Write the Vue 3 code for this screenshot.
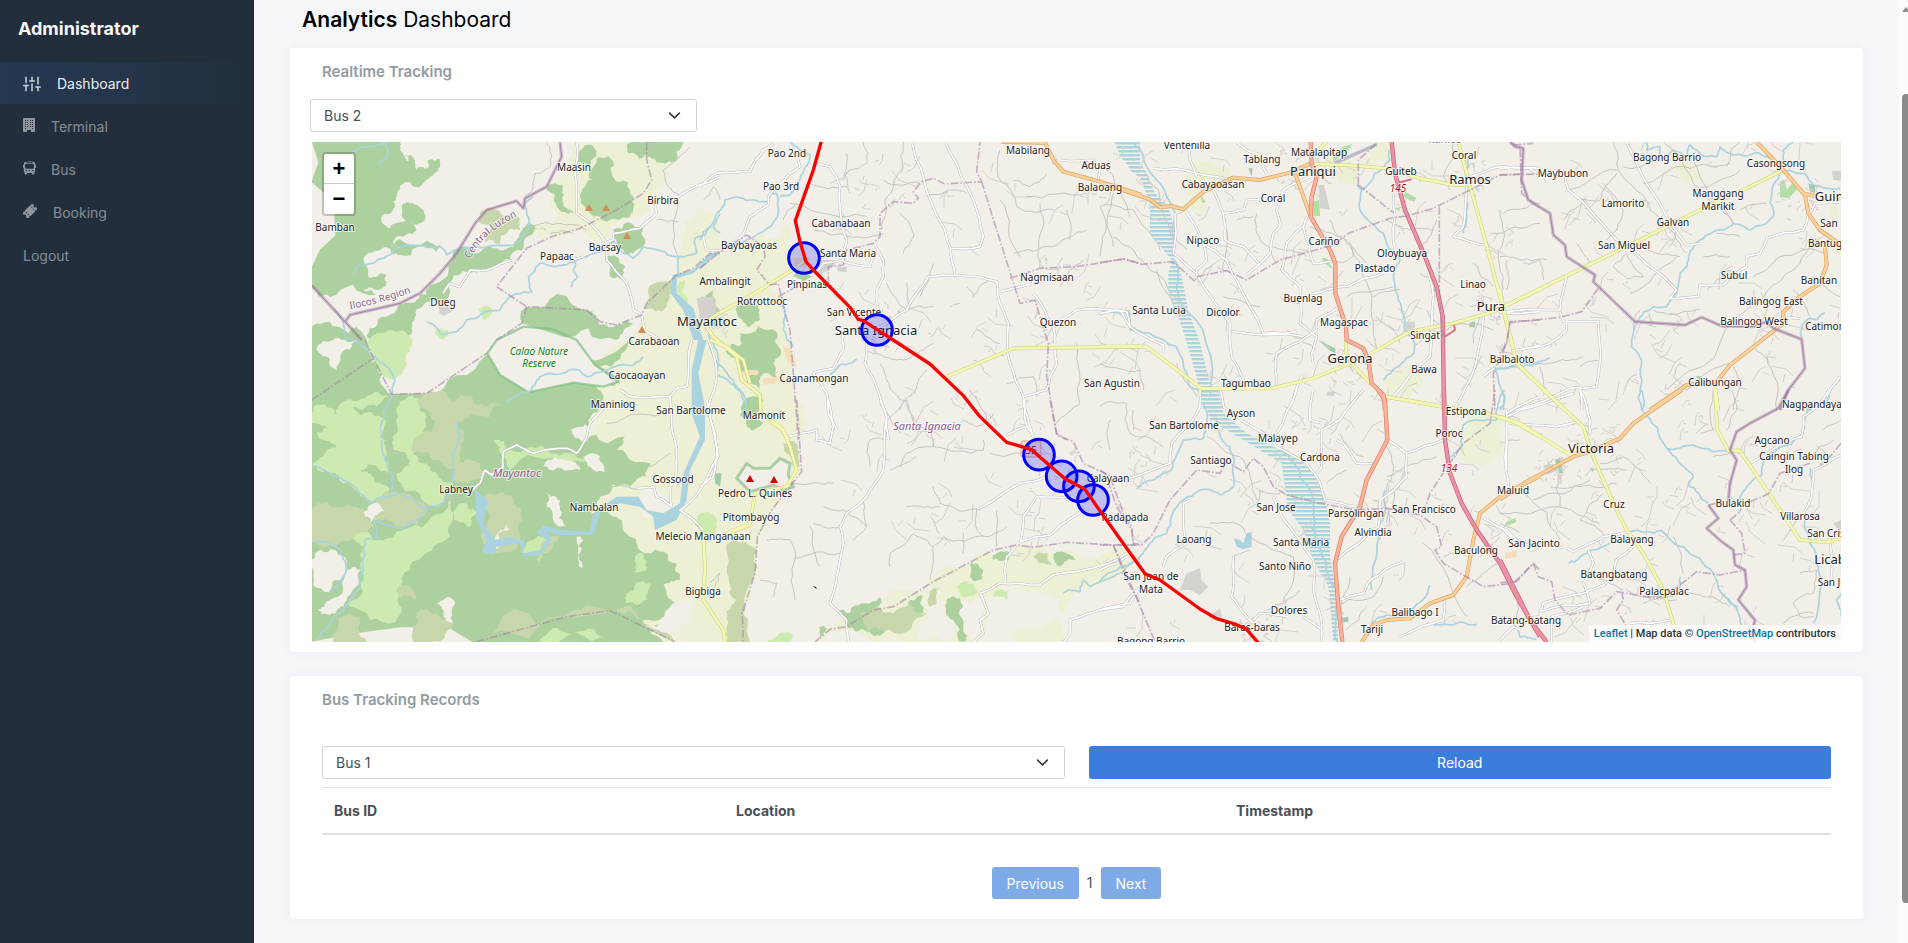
<script setup>
import { ref } from 'vue'

const buses = ['Bus 1', 'Bus 2', 'Bus 3']
const trackedBus = ref('Bus 2')
const recordBus = ref('Bus 1')

const navItems = [
  { label: 'Dashboard', icon: 'sliders', active: true },
  { label: 'Terminal', icon: 'building' },
  { label: 'Bus', icon: 'bus' },
  { label: 'Booking', icon: 'ticket' },
  { label: 'Logout', icon: null }
]

// Map sheets: each has its own origin, with three units to a map pixel.
const sheets = {
  A: [280, 0], B: [310, 340], C: [700, 130], D: [700, 400],
  E: [1100, 130], F: [1100, 390], G: [1500, 130], H: [1500, 390]
}
const place = (s) => `translate(${sheets[s][0]} ${sheets[s][1]}) scale(0.33333)`

const random = (start) => {
  let seed = start
  return () => (seed = (seed * 16807) % 2147483647) / 2147483647
}

const areas = [
  ['farm', 'A', 'M880 427 1200 427 1195 480 1160 500 1150 560 1110 590 1100 640 1020 660 960 720 880 690 820 710 740 690 830 640 810 560 860 510Z'],
  ['farm', 'A', 'M1210 665 1300 640 1320 700 1320 1020 1040 1020 1090 960 1150 870 1190 830 1200 760Z'],
  ['farm', 'C', 'M0 285 60 330 90 370 150 330 230 330 280 270 290 400 240 440 180 470 240 500 270 600 285 700 295 930 0 930Z'],
  ['farm', 'B', 'M960 0 1320 0 1320 905 1060 905 620 905 850 560 850 200Z'],
  ['farm', 'D', 'M0 0 293 0 305 215 215 330 172 410 165 520 127 640 130 726 0 726Z'],
  ['farm', 'D', 'M690 560 800 500 860 450 980 440 1150 480 1320 470 1290 500 1140 560 1100 620 1100 726 700 726 820 720 850 590Z'],
  ['farm', 'D', 'M350 726 400 680 500 650 690 570 780 550 800 580 760 620 820 726Z'],
  ['farm', 'E', 'M260 130 330 90 390 110 390 150 320 180 300 260 270 200Z'],
  ['farm', 'E', 'M650 100 770 106 770 165 710 160Z'],
  ['farm', 'E', 'M820 36 870 36 875 100 800 105Z'],
  ['farm', 'E', 'M850 750 960 725 960 770 920 800 855 795Z'],
  ['farm', 'F', 'M1100 95 1215 85 1210 190 1140 230 1080 210Z'],
  ['plot', 'G', 'M520 110 570 90 610 145 560 165Z M985 230 1015 225 1010 265 990 260Z'],
  ['bare', 'D', 'M860 590 1000 570 1080 600 1060 660 1020 690 940 700 880 726 850 700 870 650Z'],
  ['bare', 'D', 'M670 600 740 620 760 700 740 726 650 726 680 660Z'],
  ['forest', 'A', 'M96 427 360 427 375 470 400 490 400 530 395 545 350 590 345 620 305 650 330 685 385 665 410 690 345 715 330 745 250 775 265 830 320 825 320 855 250 870 290 885 150 892 96 860Z'],
  ['forest', 'A', 'M375 465 405 480 410 510 440 505 445 480 480 478 470 515 420 560 385 540Z'],
  ['forest', 'A', 'M365 620 400 610 430 630 435 660 400 675 370 655Z'],
  ['forest', 'A', 'M320 740 400 735 480 740 470 755 360 765Z'],
  ['forest', 'A', 'M520 770 560 740 640 745 710 720 750 670 800 690 740 710 690 780 620 815 560 815 500 860 485 915 420 925 395 985 350 1020 270 1020 270 985 350 930 410 900 450 855Z'],
  ['forest', 'A', 'M96 1020 110 970 150 965 150 1020Z'],
  ['forest', 'A', 'M205 1020 230 980 260 1020Z'],
  ['forest', 'A', 'M740 920 920 930 960 975 1010 975 1040 960 1060 970 1010 1020 840 1020 725 970Z'],
  ['forest', 'A', 'M960 470 1000 485 1000 530 1060 590 1050 650 980 665 940 650 915 620 915 560 930 510Z'],
  ['forest', 'A', 'M1090 427 1210 427 1180 485 1130 490 1110 470 1050 460 1040 440Z'],
  ['forest', 'A', 'M800 560 850 560 850 610 880 640 830 620Z'],
  ['forest', 'A', 'M900 450 940 440 950 470 930 500 890 490Z'],
  ['forest', 'A', 'M1000 690 1090 685 1095 720 1060 760 1010 730Z'],
  ['forest', 'A', 'M975 780 1010 770 1035 800 1030 840 990 830Z'],
  ['forest', 'B', 'M5 0 170 0 200 60 250 162 350 160 530 45 560 0 960 0 870 80 930 130 860 140 870 200 840 260 780 270 800 295 860 285 950 290 920 330 1020 370 1010 410 960 440 870 470 840 520 920 530 960 590 1010 640 1100 670 1110 720 1060 735 1100 790 1000 840 1060 905 5 905Z'],
  ['grass', 'B', 'M5 225 30 195 80 225 110 180 180 165 235 170 200 200 130 200 190 225 220 235 210 290 225 350 235 400 200 380 150 390 200 430 240 450 190 485 100 430 60 400 5 375 40 350 80 320 20 280 50 260 5 250Z'],
  ['grass', 'B', 'M270 185 330 180 350 230 340 290 310 340 350 370 380 400 430 430 400 490 350 490 280 450 260 400 300 360 250 330 260 250Z'],
  ['grass', 'B', 'M100 590 190 600 260 575 400 520 420 480 430 530 370 620 300 690 260 750 240 850 180 840 115 790 160 700 160 620Z'],
  ['grass', 'B', 'M170 5 310 0 290 70 250 120 200 70Z'],
  ['grass', 'B', 'M550 300 600 330 720 340 830 360 760 380 600 390 580 350Z'],
  ['grass', 'B', 'M670 600 700 590 710 640 640 640Z'],
  ['grass', 'B', 'M430 540 470 490 500 520 480 560Z'],
  ['grass', 'B', 'M950 760 1020 730 1010 780 950 790Z'],
  ['grass', 'B', 'M975 650 1000 640 1010 690 975 700Z'],
  ['grass', 'B', 'M700 890 790 880 900 905 690 905Z'],
  ['scrub', 'B', 'M320 180 430 185 450 160 490 190 580 195 530 235 440 245 455 320 440 380 380 360 310 340 320 290 370 280 380 240Z'],
  ['scrub', 'B', 'M190 490 280 460 345 490 350 520 280 560 190 540Z'],
  ['scrub', 'B', 'M5 510 100 500 165 510 190 560 110 605 40 620 5 600Z'],
  ['scrub', 'B', 'M530 460 610 490 640 540 630 600 550 640 520 570Z'],
  ['scrub', 'B', 'M90 830 150 830 170 905 70 905Z'],
  ['scrub', 'B', 'M320 820 380 820 430 850 390 905 310 905Z'],
  ['scrub', 'B', 'M260 745 310 750 320 780 270 775Z'],
  ['scrub', 'B', 'M500 905 760 830 900 815 1000 850 1090 905Z'],
  ['scrub', 'B', 'M440 370 510 370 520 400 470 430 430 420Z'],
  ['scrub', 'B', 'M1280 650 1320 640 1320 905 1270 905 1250 860 1280 780Z'],
  ['scrub', 'B', 'M680 660 750 580 730 620 690 680Z'],
  ['bare', 'B', 'M5 660 75 630 110 680 90 720 60 755 10 735Z'],
  ['bare', 'B', 'M110 690 155 690 150 730 100 800 60 825 18 805 60 780Z'],
  ['bare', 'B', 'M160 520 210 495 225 515 180 555Z'],
  ['bare', 'B', 'M820 350 870 350 885 395 840 380Z'],
  ['bare', 'B', 'M700 380 780 360 810 390 720 390Z'],
  ['bare', 'B', 'M710 460 750 500 770 560 750 560 710 500Z'],
  ['bare', 'B', 'M380 790 435 785 430 850 400 820Z'],
  ['bare', 'B', 'M20 30 70 0 140 0 90 50 80 90 50 50Z'],
  ['bare', 'B', 'M985 455 1080 470 1080 520 1000 530 980 490Z'],
  ['bare', 'B', 'M570 620 590 550 600 570 540 640Z'],
  ['bare', 'B', 'M800 590 820 600 815 690 805 660Z'],
  ['bare', 'B', 'M1060 840 1140 780 1150 840 1100 880 1010 860Z'],
  ['clearing', 'B', 'M340 0 540 0 530 40 350 160 250 162 280 90Z M560 0 800 0 855 75 925 125 880 140 790 128 655 157 570 105 532 40Z'],
  ['clearing', 'A', 'M725 970 880 1020 660 1020Z'],
  ['scrub', 'A', 'M600 640 650 630 715 650 720 690 680 700 660 735 615 725 635 685 600 670Z'],
  ['scrub', 'A', 'M1100 905 1180 830 1190 850 1160 920 1090 935Z'],
  ['grass', 'A', 'M590 925 640 930 610 960Z'],
  ['grass', 'A', 'M465 995 505 990 490 1020Z'],
  ['grass', 'A', 'M1190 860 1215 840 1220 910 1190 910Z'],
  ['forest', 'C', 'M20 580 40 480 60 540 60 590Z'],
  ['forest', 'C', 'M75 665 125 640 120 610 230 605 235 650 220 700 230 740 190 730 180 780 140 760 110 690Z'],
  ['forest', 'C', 'M110 530 160 520 180 570 140 590Z'],
  ['forest', 'C', 'M280 440 310 420 340 440 310 460Z'],
  ['forest', 'C', 'M130 815 190 810 180 840 150 860 190 880 140 890Z'],
  ['sand', 'C', 'M250 650 270 655 290 710 265 700Z M130 720 175 720 175 735 130 735Z M190 745 240 740 225 760 190 765Z M280 385 330 380 320 410 285 410Z'],
  ['forest', 'D', 'M410 635 450 640 500 610 540 592 530 630 560 645 590 650 560 690 500 695 440 680Z'],
  ['forest', 'D', 'M650 590 675 590 670 640 640 660 620 630Z'],
  ['forest', 'D', 'M740 600 780 595 790 690 800 720 780 726 760 660Z'],
  ['forest', 'D', 'M355 680 380 685 360 710Z'],
  ['forest', 'D', 'M1060 465 1110 465 1125 480 1080 500Z'],
  ['forest', 'D', 'M810 490 850 510 850 540 810 530Z'],
  ['forest', 'D', 'M880 465 930 465 925 480 880 480Z'],
  ['scrub', 'D', 'M80 430 140 430 170 450 165 520 127 640 130 726 80 726 110 600 95 540Z'],
  ['scrub', 'D', 'M480 640 580 640 640 620 680 640 570 690 500 700Z'],
  ['scrub', 'D', 'M1000 470 1040 460 1060 490 1020 490Z'],
  ['scrub', 'D', 'M690 580 720 560 710 610 690 620Z'],
  ['scrub', 'D', 'M250 130 290 130 300 200 280 200Z'],
  ['grass', 'D', 'M0 340 45 350 40 400 0 410Z'],
  ['grass', 'D', 'M770 560 820 550 820 590 780 590Z'],
  ['grass', 'D', 'M880 590 930 570 920 600Z'],
  ['grass', 'D', 'M240 700 280 710 270 726 200 726Z'],
  ['reserve', 'D', 'M110 235 140 190 160 205 210 205 240 175 270 190 265 225 280 260 250 272 220 255 150 275Z'],
  ['park', 'E', 'M640 215 658 210 660 258 640 258Z M730 50 755 42 750 55 700 95 700 80Z M885 235 900 232 898 245Z M915 185 950 205 940 215 910 200Z M665 385 680 385 700 420 675 400Z M300 195 318 215 308 220Z M260 155 275 150 275 165Z'],
  ['park', 'G', 'M840 155 855 150 860 180 885 150 890 180 865 205 840 200Z'],
  ['park', 'F', 'M1215 400 1245 385 1250 395 1220 408Z'],
  ['wood', 'E', 'M655 630 705 655 708 670 690 662Z M1108 578 1125 574 1125 592 1108 592Z M445 115 458 115 455 140Z'],
  ['wood', 'G', 'M925 160 945 165 945 190 930 185Z M585 740 603 738 603 750Z'],
  ['wood', 'H', 'M165 210 180 203 190 250 178 250Z M268 235 283 235 278 245Z'],
  ['wood', 'F', 'M725 685 745 680 745 695 728 697Z'],
  ['wood', 'D', 'M45 220 65 220 60 260 45 250Z'],
  ['urban', 'A', 'M475 920 515 920 515 935 490 948 478 940Z M1250 895 1300 890 1310 940 1260 950Z'],
  ['urban', 'E', 'M655 165 672 165 690 240 660 235Z M915 575 945 575 945 592 920 605Z M680 785 700 785 705 797 680 797Z'],
  ['urban', 'F', 'M240 600 260 550 300 535 305 570 325 590 300 615 270 600Z M325 680 360 655 365 680 340 692Z M680 5 705 5 700 18Z'],
  ['urban', 'G', 'M995 122 1023 122 1023 152 1000 150Z'],
  ['urban', 'H', 'M130 225 160 222 175 240 140 255Z M1000 400 1023 390 1023 430Z'],
  ['urban', 'C', 'M0 500 40 500 45 560 0 570Z M350 390 410 390 400 410 350 440Z M410 410 440 410 440 425 415 425Z'],
  ['sand', 'F', 'M1215 490 1250 480 1250 500 1215 508Z'],
  ['water', 'F', 'M402 445 420 450 430 460 440 430 455 425 455 470 430 478 410 470Z'],
  ['water', 'B', 'M495 450 535 480 520 550 555 600 600 590 645 605 640 640 690 630 710 600 680 580 700 555 750 570 840 575 850 520 920 470 985 470 1010 510 1060 520 1110 490 1120 400 1170 290 1145 220 1145 90 1165 0 1190 0 1165 100 1185 200 1185 300 1140 390 1130 480 1100 540 1035 570 1030 530 990 500 930 490 870 520 850 585 750 585 710 575 725 600 690 645 640 650 630 610 560 620 550 645 515 635 530 600 500 540Z'],
  ['water', 'A', 'M1320 760 1290 775 1240 820 1190 835 1190 880 1240 925 1270 1020 1240 1020 1210 930 1172 880 1178 825 1240 810 1290 760Z'],
  ['airfield', 'E', 'M700 95 830 38 832 48 706 104Z']
]

const hatched = [
  ['E', 'M45 36 95 36 105 80 135 120 165 190 205 230 225 300 220 380 245 440 265 540 300 640 330 760 362 840 310 840 290 740 255 620 235 560 205 490 205 430 215 390 150 310 150 220 120 140 60 80Z'],
  ['F', 'M305 0 355 0 370 70 440 130 540 180 600 210 650 260 675 330 690 400 690 500 705 580 715 755 700 755 685 590 640 510 610 420 565 360 545 220 430 150 330 90Z'],
  ['C', 'M1245 36 1320 36 1320 145 1290 120Z']
]

const lines = [
  ['river', 'A', 'M220 823 240 795 280 790 340 750 400 735 480 738 500 765 540 745 600 742 700 735 745 690 740 640 735 610 760 590'],
  ['river', 'A', 'M215 457 270 440 320 427M315 427 322 470 300 490'],
  ['river', 'A', 'M440 965 480 1000 530 995 560 960 600 945 660 930 690 890 720 880 755 875 745 830 780 790 830 800 885 785 920 770 1000 725 1060 775 1090 740 1135 750 1195 770 1250 760 1245 715 1275 705 1290 680'],
  ['river', 'A', 'M885 775 880 810 893 830 873 862M1195 770 1195 825M165 930 190 975 205 1020'],
  ['river', 'A', 'M1320 700 1300 680 1320 640'],
  ['river', 'B', 'M120 0 170 30 205 60 255 120 245 170 210 260 215 310 240 390 245 460M5 375 60 400 120 430 180 490 270 460 350 510 280 565 190 545 205 590 165 600 160 690 150 740 100 810 50 865 20 900'],
  ['river', 'B', 'M5 605 90 630 110 685 60 755M350 500 400 490 420 460 430 430 430 370 450 290 435 245M590 185 655 157 690 110 810 90 830 110 890 90 970 75 1000 50'],
  ['river', 'B', 'M1205 0 1220 100 1300 160 1305 220'],
  ['river', 'C', 'M0 330 30 290 75 210 160 210 200 215 215 190 230 190 225 270 180 310 120 340 50 370 0 415M330 70 325 100 300 150 270 195 240 200M270 36 300 60 330 75'],
  ['river', 'C', 'M470 688 425 702 390 735M30 560 50 700 110 770 140 820M245 500 250 600 280 650M1285 540 1290 600 1325 605'],
  ['river', 'D', 'M1090 578 1140 575 1150 540 1170 560 1240 530 1270 520 1290 490 1320 480'],
  ['river', 'E', 'M95 36 140 110 200 200 225 250 222 380M770 165 785 180 870 90 865 60M785 180 780 240 850 310 900 390 880 440 895 510 915 600 935 620 942 670 905 700 850 750'],
  ['river', 'E', 'M0 555 60 550 100 595 190 630 230 650 250 700 270 770 305 790M1105 80 1100 200 1090 310M1320 700 1240 710 1185 720 1215 800 1210 840M225 390 235 500 330 800'],
  ['river', 'F', 'M110 298 160 270 215 240 250 150 310 145 320 90 310 40M350 90 360 140 390 170 400 230 400 290 360 315 300 300 250 330 200 430 150 460 120 500 60 530 0 575'],
  ['river', 'F', 'M540 180 600 260 640 330 640 420 680 520 710 600 712 756M1213 0 1190 90 1090 105 1085 170 1050 200M815 700 860 675 930 660 990 585M980 700 1030 703 1130 703M855 300 830 420 815 600'],
  ['river', 'G', 'M440 36 440 60 480 50 480 90 520 60 560 80 570 45 620 80 650 80 660 50 700 75 780 70 820 90 850 120 915 130 940 165 1020 175M880 36 850 60 850 100 840 130 815 180 820 260 750 300 700 280 670 300 600 330 570 365 560 410 540 430 530 490 500 530 460 530 410 575 395 650 425 700 425 840'],
  ['river', 'G', 'M905 625 905 590 930 565 950 570 975 548M1020 750 980 800 920 840M0 715 90 700 150 685'],
  ['river', 'H', 'M425 0 425 60 500 175 530 205 580 260 565 285 625 340M500 175 580 165 640 185 690 185M985 0 980 40 920 60 910 130 830 180 790 215 785 255 740 290 720 320 715 370'],
  ['river', 'H', 'M205 518 225 515 260 490 330 460M390 425 485 422 550 470 640 550 665 610 705 650 725 720M665 610 715 650M40 700 60 740 110 750M0 60 15 30 5 0M1023 610 1010 630 1023 680M915 370 930 460 955 540 940 700M540 560 540 600M930 235 940 280'],

  ['minor', 'A', 'M800 427 810 500 765 520 760 560 735 590M880 700 810 700M755 680 840 670 920 690M1150 510 1200 470 1230 440M1195 600 1195 770M1150 510 1165 560 1200 590M1130 660 1195 665M1270 600 1300 560 1320 600'],
  ['minor', 'B', 'M390 500 440 470M890 250 950 230 1060 220M870 465 910 440 985 445M1020 380 1080 340'],
  ['minor', 'C', 'M490 36 500 100 450 120 430 150M610 36 605 120 555 210 545 300M440 70 450 190M550 150 660 160M330 160 440 170M270 220 440 260 500 260M390 160 450 120M340 300 450 320 550 310M250 270 290 220M600 250 640 310 630 340 610 370M680 200 770 180 800 190M620 460 630 530M500 660 590 690 670 660 700 640M700 400 660 500M940 150 990 170 1040 130M980 200 1160 190M940 370 1060 350 1160 300M900 60 900 150 950 230 1060 240M1200 230 1200 380M1240 190 1240 350M1020 220 1020 400M900 210 960 380M1100 240 1110 330'],
  ['minor', 'C', 'M800 470 820 500 870 450M830 600 900 640M750 530 780 520M920 760 1000 740 1010 800M820 690 870 740M1080 470 1150 390M560 460 620 540 700 530M540 700 560 750 620 820 650 900M600 840 680 720M810 780 860 870M1130 640 1140 820 1070 880'],
  ['minor', 'D', 'M510 200 510 120 550 120M550 80 620 0M620 0 650 80 720 90 790 60 830 80 880 40M690 80 700 140 850 150 850 120M600 200 620 160 700 140M870 160 960 160M570 210 650 170M500 380 430 330 370 320M490 300 500 380 460 420M340 370 420 380M200 420 270 420 285 450 285 600M285 475 420 460M330 380 360 500M640 400 570 460 570 500M640 400 680 420 700 440 690 540M700 440 730 410 860 410 920 380M790 400 790 460M700 260 720 310 840 330M620 320 720 320M830 330 830 390 850 410M890 330 890 440M280 250 400 250M180 540 230 550 220 590M30 550 60 520 30 600M720 400 690 350M540 0 600 100'],
  ['minor', 'E', 'M130 120 190 250 260 360M0 230 100 240 180 360M370 250 370 430M300 440 340 400M470 250 480 330 530 400M630 290 750 340 760 380 700 400M690 270 740 340 800 400M750 350 790 440 820 600 830 660M410 270 460 260M860 270 930 300 1000 300M1010 270 960 350M1210 250 1320 220M1170 310 1320 280M960 430 1010 450 1000 510M540 500 600 520M740 500 880 470M830 560 900 640M1220 390 1220 480M1120 400 1180 470M940 650 990 600 1180 600M820 500 900 480M0 100 60 180 90 260M40 320 150 420 240 540M170 420 240 560M1060 40 1030 140 1050 180M1270 400 1320 390M1140 560 1120 640M370 500 480 530M520 350 620 380M560 600 640 650M680 680 730 700M230 700 290 800M0 700 120 720 130 780M980 540 1030 600'],
  ['minor', 'F', 'M0 50 80 40 90 130 140 140M140 140 190 170M330 400 420 405 450 440 580 500M400 500 450 480M580 500 550 640 500 660M470 340 480 300 540 310M320 140 420 200 470 330M680 280 740 240M860 150 880 240 860 290 870 400 840 450M900 290 880 300 860 400M970 460 1100 680M1140 500 1200 440M1200 520 1100 590M680 660 820 620 850 560M750 560 730 700M720 130 790 200M860 260 1010 200M600 600 550 640M1230 560 1250 690M1030 500 1090 470M740 720 800 650M100 60 100 120M30 90 30 180'],
  ['minor', 'G', 'M340 36 350 100 400 170 450 240 540 340 560 370M370 110 470 90M200 180 350 120M190 270 260 200M350 130 300 210 230 210M490 36 620 200 700 280M580 90 700 280M430 160 530 110 690 100M590 180 720 120M720 36 680 110M0 240 10 330 10 480M0 380 60 390 140 390M120 390 130 450M230 340 270 400M500 780 740 540 900 400 980 310M620 480 650 450 690 420M760 440 840 380 980 370M540 380 470 370 410 330M340 410 380 445 430 440M340 410 380 370 430 440M390 490 530 380M540 700 520 740 560 780 700 700M700 710 720 770 700 840M800 680 830 840M760 650 810 700M460 540 540 550 600 540M400 600 420 540M450 590 450 550M880 480 930 560M940 440 1020 500M610 380 690 380M650 310 720 320M310 160 370 240 350 300 320 330M800 220 720 240M120 700 210 690 250 680M120 710 140 790M240 710 300 690'],
  ['minor', 'H', 'M15 80 60 90M640 0 640 120 600 130M690 0 710 60 680 120M280 240 380 240M150 290 240 290 350 280M0 370 120 360 300 400M70 310 180 450M180 240 180 350M100 330 270 270M310 310 240 390M300 220 370 200 420 240 450 280M0 400 60 430M380 600 560 610 640 620 690 650M440 690 400 720M900 550 950 540 940 610 880 640 900 680 940 680M0 160 60 150M520 440 550 550M850 450 890 390M930 200 1000 150M640 200 690 190M590 130 620 100M430 640 530 630M970 120 1023 90M240 30 250 60M290 560 370 600M850 700 940 670M240 390 320 440'],

  ['tertiary', 'A', 'M890 427 885 520 890 640 940 680 980 730 980 780 1040 850 1060 930 1085 945M1000 700 1080 685 1130 640 1125 600M1195 590 1320 530M980 725 1000 720 1000 700M910 770 860 780M490 880 510 850 540 860 570 810 620 810 700 780M1085 945 1095 990 1140 1020'],
  ['tertiary', 'B', 'M490 450 510 430 525 390 545 405 580 380 580 335 620 315 670 340 770 325 800 340 830 290 840 250 880 205M930 150 960 170 1080 170 1100 145 1130 140 1145 0M1080 170 1085 260 1100 350 1095 420 1080 440 1085 500M1195 0 1220 100 1195 200 1225 350 1170 450 1110 510 1180 570M980 445 1030 440 1040 470 1085 500'],
  ['tertiary', 'C', 'M0 170 50 130 150 125 190 60 220 40M270 45 300 110 270 130 205 200 205 225 150 260 130 310 90 360 20 360 10 320M350 100 390 110 420 170 420 240 440 330 430 390 370 400 350 430M430 395 510 410 520 370M525 345 550 390 550 440 530 480 535 550M540 590 620 540 650 490 685 440 765 435 890 455 900 520 925 580 930 700 970 800 975 870 1000 920M635 36 650 90 670 140 730 290 750 350 765 435M750 355 840 350 850 320 820 210 780 130 735 36M500 630 495 700 540 800 560 860 565 930M430 600 430 660 400 715 340 730 380 790 385 850 410 900M900 485 1000 460 990 440M1080 90 1180 90 1200 120 1195 150M1000 490 1060 590 1065 640M1060 595 1130 540 1280 545 1290 590M1065 660 1070 700 1050 740 1040 780 970 800'],
  ['tertiary', 'D', 'M540 0 560 50 550 210 500 290 440 340 420 380 430 430 410 530 390 610 440 660 445 726M265 110 350 90 350 120 390 130 400 80 385 0M970 0 985 60 1000 110M980 80 920 105M840 325 960 250 1040 230M960 430 970 350 1010 290 1110 290M960 425 1050 405 1120 350 1150 330M950 435 920 470 915 550M820 726 850 700 840 660 865 640 840 580 900 550 1020 555 1060 525 1150 510 1250 480 1280 460M1090 726 1110 700 1110 660 1200 630 1290 610 1320 560M20 0 50 140 40 230 0 260'],
  ['tertiary', 'E', 'M160 115 290 130 400 145M260 36 290 140M410 36 440 60 480 75 500 130M630 140 550 180 530 240 540 290 520 310 510 370 440 435M340 180 370 250 375 330 430 350 480 405M370 250 430 240 440 210 490 210M225 250 220 370 290 430 390 580 395 680 430 750M255 240 310 340 320 390 290 420 290 440M310 340 380 390 410 450 490 610 610 620M620 260 610 290 560 340 545 420 600 470 600 580 650 620 635 670 640 700M395 605 490 615 590 605M530 770 530 670 620 620 650 600 650 570 710 535M610 290 640 400 700 395M640 490 700 475 740 470 850 430M880 190 880 330 890 380M1100 170 1090 290 1060 320 1150 345M1110 140 1200 110 1320 115M985 430 1000 500 990 680 880 800M0 550 60 540 90 590 190 645 190 670M1210 548 1320 545M1150 560 1110 750 1060 840M1320 645 1250 660 1220 690 1150 740M610 730 570 830'],
  ['tertiary', 'F', 'M360 0 370 50 490 130 530 170 620 220 660 280 675 330 770 350M590 0 530 130M790 0 720 90 665 120 665 230 650 250M640 0 630 90 665 100M300 0 300 50 215 160 210 220 90 265M710 150 730 160 770 220 820 220M865 150 920 190 920 260 840 330 835 410 710 510M920 190 1030 150M520 320 560 400 600 450 640 510 640 600 665 700 665 756M270 330 250 340 260 460 200 500 190 530M400 500 395 620 440 680 460 700M460 690 480 670 560 680M610 680 660 715M715 630 790 610 810 570 910 515M1150 385 1220 420 1260 460M1220 60 1215 200 1225 290M1035 620 1030 690 900 740M1250 700 1320 680M0 540 100 490M0 660 70 650 110 600M1320 20 1220 70'],
  ['tertiary', 'G', 'M0 115 90 115 110 130M195 140 205 180 350 330 530 480 510 505M380 36 400 80 560 345 600 340M510 505 595 500 600 465 670 465 740 410 740 380 780 370 800 325 910 300 945 220 1023 215M200 440 180 540 0 548M180 545 190 575 295 575 300 700 290 770 210 775 50 840M60 660 150 640 200 600 200 570M240 770 245 840M850 565 900 565M1020 740 980 800'],
  ['tertiary', 'H', 'M240 0 270 90 270 130M220 10 60 60 20 80 20 240M30 100 170 110 230 95M200 475 220 485 310 440 390 425M180 475 190 470M0 410 40 450 110 470M265 480 280 520 250 580 270 640 120 665 130 640 250 610 330 570 350 510 400 470M155 756 155 680 250 650M390 700 510 690M985 0 960 40 910 80 905 140 860 155 750 220M1023 195 940 240 935 320 910 370M990 460 1000 590M0 750 40 710 60 720'],

  ['secondary', 'C', 'M740 740 940 655 1320 650M0 590 40 560 180 480 270 425 310 395M20 590 40 620 110 680 125 750 180 795 182 850 240 890 265 930'],
  ['secondary', 'D', 'M210 65 250 90 270 140 290 210 260 260 165 280 150 370 80 400M10 410 15 500 10 600 70 690 75 726'],
  ['secondary', 'B', 'M1200 0 1250 20 1300 60 1320 130M1320 555 1250 580'],
  ['secondary', 'E', 'M0 650 140 650 305 776 360 776 515 775 640 745 750 700M640 102 740 105 860 115 960 145 1060 165 1100 165M1075 36 1105 150 1150 310 1200 500 1225 600 1250 700 1320 768M810 672 930 605 1060 580 1180 545 1320 478M855 800 1025 830M738 630 738 670 760 705 815 765M655 60 680 36'],
  ['secondary', 'F', 'M850 18 1030 50 1180 75 1250 100 1320 140'],
  ['secondary', 'G', 'M0 480 10 530 50 700 195 840M20 525 400 340 600 240 740 175 850 120M645 770 655 840M1000 340 1023 370'],
  ['secondary', 'H', 'M130 0 250 110 275 190 340 340 380 420 430 490 490 600 520 700 540 756M0 80 60 100 210 195 240 190M645 0 652 120 685 182 720 182 800 300 900 450 985 457 1023 445M985 457 990 440'],
  ['primary', 'C', 'M905 36 1035 38 1060 90 1090 125 1200 155 1325 195'],
  ['primary', 'E', 'M0 158 60 178 150 208 180 232 215 228 250 238 310 185 400 143 480 150 570 128 632 100M585 130 632 260'],
  ['primary', 'F', 'M785 756 820 705 860 690 930 685 990 640 1060 615 1100 560 1120 450 1140 370 1200 320 1320 258'],
  ['primary', 'G', 'M450 840 560 765 650 755 690 705 850 580 850 545 900 500 960 460 980 405 975 350M770 36 850 120 910 190 950 200M915 195 925 250 960 300 1023 345'],
  ['primary', 'H', 'M0 328 80 275 220 200 270 185 360 145 400 100 545 0'],
  ['trunk', 'E', 'M632 36 635 100 650 140 635 200 632 260 690 360 706 400 706 490 738 590 740 630 790 655 805 690 815 760 850 795 855 840'],
  ['trunk', 'F', 'M835 0 855 30 862 150 800 270 780 350 725 440 705 520 715 650 727 756'],
  ['motorway', 'E', 'M875 36 885 130 915 240 975 380 1010 470 1028 560 1032 840'],
  ['ramp', 'E', 'M890 160 935 148M1035 620 1065 600 1062 582'],
  ['motorway', 'F', 'M1032 0 1035 150 1050 250 1085 340 1130 420 1200 520 1250 620 1320 740'],
  ['motorway', 'H', 'M0 510 40 590 90 690 140 756']
]

const borders = [
  ['province', 'A', 'M840 427 845 470 800 560 735 595 730 625 710 603 620 630 585 670 530 760 480 820 420 880 360 910 210 945 195 965 96 857M195 965 245 1020'],
  ['province', 'G', 'M30 36 45 50 70 55 65 150 85 210 150 250 160 315 195 345 200 380 285 435 280 455 405 575 555 585 605 562 665 588 760 590 800 575 820 595 905 628 915 715 865 780 840 840'],
  ['province', 'H', 'M865 0 835 55 750 100 710 125 690 180 710 210 690 280 685 335M625 345 655 385 620 415 665 455 700 480 705 525 735 540 740 590 715 630 765 690 755 730 765 756'],
  ['town', 'H', 'M690 390 725 430 735 490 700 495M690 390 715 370M1023 160 990 200 960 225'],
  ['town', 'A', 'M1100 427 1100 480 1115 540 1090 580 1000 635 900 685 815 710 740 745 650 860 740 920 920 930 960 965 1010 975 1085 945 1100 910 1190 825 1240 805 1290 760 1320 760M740 920 725 970 650 1020'],
  ['town', 'B', 'M165 0 190 55 245 163 350 160 530 40M5 180 190 55M500 905 770 830 900 812 1095 905'],
  ['town', 'C', 'M0 415 60 365 140 315 190 350 195 380 170 420 210 465 235 460 250 530 270 600 295 930M235 500 280 475 385 470 385 410 430 405 440 360 520 340 540 320 540 250 580 215 640 220 655 205 640 185 665 155 700 145 735 162 845 155 830 125 840 36M845 155 890 300 960 520 1005 510 1020 560 1045 640 1040 740 1070 910 1100 930M930 445 1020 415 1130 410 1270 387 1320 400'],
  ['town', 'D', 'M290 0 305 215 215 330 172 410 165 520 127 640 130 726M345 726 390 688 440 680 520 630 580 620 700 545 880 450 950 435 1000 442 1100 427 1240 435 1310 435M1050 0 1070 105 1120 125 1150 190 1215 220 1250 320 1295 390 1300 430M1240 435 1280 540 1320 610'],
  ['town', 'E', 'M0 398 70 387 125 403 220 395 285 455 290 440 380 422 440 450 540 390 700 345 745 310 870 265 920 258 1000 235 1130 170 1200 135 1320 132M775 165 775 90 830 40M775 165 880 248M1018 230 1018 490 1028 620M1230 36 1260 50 1265 190 1320 235M1320 570 1230 575 1220 640 1180 730 1185 840'],
  ['town', 'F', 'M0 240 30 260 70 370 95 410 100 460 125 465 160 430 210 330 290 240 360 250 380 215 430 245 460 205 490 230 520 290 560 315 660 340 770 360 860 355 960 375 1010 410 1025 470 1005 480 1030 520 1150 590 1240 580 1300 520 1320 540M0 465 125 465M40 465 100 600 165 756M970 370 990 310 1035 240 1090 160 1170 100 1185 0'],
  ['town', 'G', 'M0 135 60 132M40 45 100 40M295 475 245 545 180 562 30 578 20 640 0 670'],
  ['town', 'H', 'M0 578 50 575 100 520 115 560 155 575 165 630 205 675 300 655 350 605 470 625 500 610 560 570 590 545 660 555 735 540M365 605 370 630 350 660 380 710M750 335 805 312 840 250 930 220M625 345 660 338']
]

const labels = [
  ['Maasin', 574, 171], ['Birbira', 663, 204], ['Bamban', 335, 231], ['Bacsay', 605, 251], ['Papaac', 557, 260],
  ['Dueg', 443, 306], ['Ambalingit', 725, 285], ['Pao 2nd', 787, 157], ['Pao 3rd', 781, 190], ['Cabanabaan', 841, 227],
  ['Santa Maria', 848, 257], ['Baybayaoas', 749, 249], ['Pinpinas', 807, 288], ['Rotrottooc', 762, 305], ['San Vicente', 854, 316],
  ['Caanamongan', 814, 382], ['Mamonit', 764, 419], ['Nagmisaan', 1047, 281], ['Quezon', 1058, 326], ['Mabilang', 1028, 154],
  ['Aduas', 1096, 169], ['Balaoang', 1100, 191], ['San Agustin', 1112, 387], ['Carabaoan', 654, 345], ['Caocaoayan', 637, 379],
  ['Maniniog', 613, 408], ['San Bartolome', 691, 414], ['Labney', 456, 493], ['Gossood', 673, 483], ['Nambalan', 594, 511],
  ['Pedro L. Quines', 755, 497], ['Pitombayog', 751, 521], ['Melecio Manganaan', 703, 540], ['Bigbiga', 703, 595],
  ['Calayaan', 1108, 482], ['Padapada', 1125, 521], ['San Juan de', 1151, 580], ['Mata', 1151, 593], ['Bagong Barrio', 1151, 645],
  ['Baras-baras', 1252, 631], ['Dolores', 1289, 614], ['Santo Niño', 1285, 570], ['Santa Maria', 1301, 546], ['Laoang', 1194, 543],
  ['San Jose', 1276, 511], ['Santiago', 1211, 464], ['San Bartolome', 1184, 429], ['Ayson', 1241, 417], ['Malayep', 1278, 442],
  ['Cardona', 1320, 461], ['Parsolingan', 1356, 517], ['Alvindia', 1373, 536], ['San Francisco', 1424, 513], ['Estipona', 1466, 415],
  ['Poroc', 1449, 437], ['Maluid', 1513, 494], ['Baculong', 1476, 554], ['San Jacinto', 1534, 547], ['Balibago I', 1415, 616],
  ['Tariji', 1372, 633], ['Batang-batang', 1526, 624], ['Ventenilla', 1187, 149], ['Tablang', 1262, 163], ['Matalapitap', 1319, 156],
  ['Cabayaoasan', 1213, 188], ['Coral', 1273, 202], ['Nipaco', 1203, 244], ['Cariño', 1324, 245], ['Guiteb', 1401, 175],
  ['Coral', 1464, 159], ['Oloybuaya', 1402, 257], ['Plastado', 1375, 272], ['Linao', 1473, 288], ['Buenlag', 1303, 302],
  ['Magaspac', 1344, 326], ['Santa Lucia', 1159, 314], ['Dicolor', 1223, 316], ['Singat', 1425, 339], ['Bawa', 1424, 373],
  ['Balbaloto', 1512, 363], ['Tagumbao', 1246, 387], ['Bagong Barrio', 1667, 161], ['Casongsong', 1776, 167], ['Maybubon', 1563, 177],
  ['Manggang', 1718, 197], ['Marikit', 1718, 210], ['Lamorito', 1623, 207], ['Galvan', 1673, 226], ['San Miguel', 1624, 249],
  ['San', 1829, 227], ['Bantug', 1825, 247], ['Banitan', 1819, 284], ['Subul', 1734, 279], ['Balingog East', 1771, 305],
  ['Balingog West', 1754, 325], ['Catimon', 1825, 330], ['Calibungan', 1715, 386], ['Nagpandayan', 1815, 408], ['Agcano', 1772, 444],
  ['Caingin Tabing', 1794, 460], ['Ilog', 1794, 473], ['Cruz', 1614, 508], ['Bulakid', 1733, 507], ['Villarosa', 1800, 520],
  ['San Cristobal', 1838, 537], ['San Juan', 1838, 586], ['Balayang', 1632, 543], ['Batangbatang', 1614, 578], ['Palacpalac', 1664, 595],
  ['Mayantoc', 707, 326, 'big'], ['Santa Ignacia', 876, 335, 'big'], ['Paniqui', 1313, 176, 'big'], ['Ramos', 1470, 184, 'big'],
  ['Pura', 1491, 311, 'big'], ['Gerona', 1350, 363, 'big'], ['Victoria', 1591, 453, 'big'], ['Guimba', 1839, 201, 'big'], ['Licab', 1830, 564, 'big'],
  ['Santa Ignacia', 927, 430, 'region'], ['Mayantoc', 517, 477, 'region'], ['Ramos', 1445, 143, 'region'],
  ['Calao Nature', 539, 355, 'nature'], ['Reserve', 539, 367, 'nature'],
  ['145', 1398, 192, 'shield'], ['134', 1449, 472, 'shield']
]

// Breaks every edge of a path into shorter, slightly bent ones, for a natural outline.
const roughen = (d, seed, amount, passes) => {
  const next = random(seed)
  return d.split('M').filter(Boolean).map((part) => {
    const closed = part.includes('Z')
    const nums = part.replace('Z', '').trim().split(/\s+/).map(Number)
    let pts = []
    for (let i = 0; i < nums.length; i += 2) pts.push([nums[i], nums[i + 1]])
    for (let pass = 0; pass < passes; pass++) {
      const out = []
      const last = closed ? pts.length : pts.length - 1
      for (let i = 0; i < last; i++) {
        const [x1, y1] = pts[i]
        const [x2, y2] = pts[(i + 1) % pts.length]
        const k = (next() - 0.5) * 2 * amount
        out.push([x1, y1])
        if (Math.hypot(x2 - x1, y2 - y1) > 8) out.push([(x1 + x2) / 2 - (y2 - y1) * k, (y1 + y2) / 2 + (x2 - x1) * k])
      }
      if (!closed) out.push(pts[pts.length - 1])
      pts = out
    }
    return 'M' + pts.map((p) => p.map(Math.round).join(' ')).join(' ') + (closed ? 'Z' : '')
  }).join('')
}

const natural = ['farm', 'forest', 'grass', 'scrub', 'bare']
const land = areas.map(([kind, sheet, d], i) => [kind, sheet, natural.includes(kind) ? roughen(d, i * 97 + 11, 0.25, 3) : d])

// Small village lanes, grown from a fixed seed so the map is always the same.
const lanes = (() => {
  const next = random(7)
  const out = []
  const centres = [[1305, 160, 26], [1350, 365, 22], [1592, 452, 30], [1490, 310, 14], [1470, 180, 16], [1800, 200, 20], [880, 330, 24], [1052, 470, 26], [1255, 628, 16], [715, 320, 14], [1550, 468, 14]]
  for (const [cx, cy, r] of centres) {
    for (let i = 0; i < 26; i++) {
      const x = cx + (next() - 0.5) * 2 * r
      const y = cy + (next() - 0.5) * 2 * r
      out.push(`M${x.toFixed(0)} ${y.toFixed(0)}l${(next() * 10 - 5).toFixed(0)} ${(next() * 10 - 5).toFixed(0)} ${(next() * 8 - 4).toFixed(0)} ${(next() * 8 - 4).toFixed(0)}`)
    }
  }
  for (let i = 0; i < 400; i++) {
    const x = 830 + next() * 1000
    const y = 146 + next() * 490
    if (y > 560 && x < 1120) continue
    const a = Math.floor(next() * 4) * Math.PI / 2 + next() * 0.7
    const l = 6 + next() * 14
    const dx = Math.cos(a) * l
    const dy = Math.sin(a) * l
    out.push(`M${x.toFixed(0)} ${y.toFixed(0)}l${dx.toFixed(0)} ${dy.toFixed(0)} ${(dx / 2 - dy / 3).toFixed(0)} ${(dy / 2 + dx / 3).toFixed(0)}m${(-dx / 2).toFixed(0)} ${(-dy / 2).toFixed(0)}l${(-dy / 2).toFixed(0)} ${(dx / 2).toFixed(0)}`)
  }
  return out.join('')
})()

const cased = ['tertiary', 'secondary', 'primary', 'trunk', 'motorway']
const flat = lines.filter((l) => !cased.includes(l[0])).map(([kind, sheet, d], i) => [kind, sheet, kind === 'ramp' ? d : roughen(d, i * 53 + 5, 0.12, 3)])
const roads = lines.filter((l) => cased.includes(l[0])).map(([kind, sheet, d], i) => [kind, sheet, kind === 'tertiary' ? roughen(d, i * 31 + 3, 0.05, 2) : d])

const stops = [[312, 384], [531, 600], [1017, 974], [1085, 1039], [1137, 1069], [1179, 1110]]
const peaks = [[589, 208], [606, 208], [627, 236], [642, 330]]
const redPeaks = [[750, 479], [774, 480]]
</script>

<template>
  <div class="shell">
    <aside class="sidebar">
      <a class="brand" href="#">Administrator</a>
      <nav class="nav" aria-label="Main">
        <a v-for="item in navItems" :key="item.label" href="#" class="nav-link" :class="{ active: item.active }">
          <svg v-if="item.icon === 'sliders'" class="icon-lg" viewBox="0 0 24 24" aria-hidden="true">
            <path d="M4 21v-7M4 10V3M12 21v-9M12 8V3M20 21v-5M20 12V3M1 14h6M9 8h6M17 16h6" />
          </svg>
          <svg v-else-if="item.icon === 'building'" class="icon" viewBox="0 0 13 14" aria-hidden="true">
            <path fill-rule="evenodd" d="M1 0h10a1 1 0 0 1 1 1v12a1 1 0 0 1-1 1H8v-2H4v2H1a1 1 0 0 1-1-1V1a1 1 0 0 1 1-1zM2 2v1h1V2zm2 0v1h1V2zm3 0v1h1V2zm2 0v1h1V2zM2 4v1h1V4zm2 0v1h1V4zm3 0v1h1V4zm2 0v1h1V4zM2 6v1h1V6zm2 0v1h1V6zm3 0v1h1V6zm2 0v1h1V6zM2 8v1h1V8zm2 0v1h1V8zm3 0v1h1V8zm2 0v1h1V8zM2 10v1h1v-1zm7 0v1h1v-1z" />
          </svg>
          <svg v-else-if="item.icon === 'bus'" class="icon" viewBox="0 0 16 16" aria-hidden="true">
            <path fill-rule="evenodd" d="M16 7a1 1 0 0 1-1 1v3.500c0 .8-.400 1.500-1 2V15.500a.5.5 0 0 1-.5.5h-2a.5.5 0 0 1-.5-.5V14H5v1.500a.5.5 0 0 1-.5.5h-2a.5.5 0 0 1-.5-.5v-2a2.500 2.500 0 0 1-1-2V8a1 1 0 0 1-1-1V5a1 1 0 0 1 1-1V2.600C1 1.600 1.700.8 2.700.6 4 .3 5.900 0 8 0s4 .3 5.300.6c1 .2 1.700 1 1.700 2V4a1 1 0 0 1 1 1zM3.500 3c-.6.1-1 .6-1 1.200v3.500c0 .5.400.8.8.8 2.900.4 6.500.4 9.400 0 .4 0 .8-.4.8-.8V4.200c0-.6-.4-1.100-1-1.200-2.700-.4-6.300-.4-9 0zM4 1.300v.900c2.500-.3 5.500-.3 8 0v-.900c-2.500-.4-5.500-.4-8 0zM4 10a1 1 0 1 0 0 2 1 1 0 0 0 0-2zm8 0a1 1 0 1 0 0 2 1 1 0 0 0 0-2zm-5 .5v1h2v-1z" />
          </svg>
          <svg v-else-if="item.icon === 'ticket'" class="icon ticket" viewBox="0 0 16 16" aria-hidden="true">
            <g transform="rotate(-45 8 8)">
              <path fill-rule="evenodd" d="M0 3.500h3.200v1h1v-1h7.600v1h1v-1H16v3a1.500 1.500 0 0 0 0 3v3h-3.200v-1h-1v1H4.200v-1h-1v1H0v-3a1.500 1.500 0 0 0 0-3zM3.200 6v1.500h1V6zm0 2.700v1.500h1V8.700zM11.800 6v1.500h1V6zm0 2.700v1.500h1V8.700z" />
            </g>
          </svg>
          <span>{{ item.label }}</span>
        </a>
      </nav>
    </aside>

    <main class="content">
      <h1 class="title"><strong>Analytics</strong> Dashboard</h1>

      <section class="card map-card">
        <h2 class="card-title">Realtime Tracking</h2>
        <div class="select-box map-select">
          <select v-model="trackedBus" aria-label="Tracked bus">
            <option v-for="b in buses" :key="b">{{ b }}</option>
          </select>
          <svg viewBox="0 0 16 16" aria-hidden="true"><path d="m2 5 6 6 6-6" /></svg>
        </div>

        <div class="map">
          <svg class="map-canvas" viewBox="312 142 1529 500" preserveAspectRatio="xMidYMid slice" role="img" aria-label="Map of bus positions">
            <defs>
              <pattern id="marsh" width="12" height="12" patternUnits="userSpaceOnUse">
                <rect width="12" height="7" fill="#aad3df" />
              </pattern>
              <path id="luzon-line" d="M470 259Q484 230 526 212" />
              <path id="ilocos-line" d="M350 309Q385 303 418 290" />
            </defs>
            <rect x="312" y="142" width="1529" height="500" fill="#f2efe9" />
            <path v-for="(a, i) in land" :key="'a' + i" :class="a[0]" :transform="place(a[1])" :d="a[2]" />
            <path v-for="(a, i) in hatched" :key="'h' + i" fill="url(#marsh)" :transform="place(a[0])" :d="a[1]" />
            <path class="reserve-line" :transform="place('B')" d="M640 -40 725 -33 800 0 855 75 925 125 880 140 790 128 655 157 570 105 532 40 560 0 640 -40Z" />
            <path class="lanes" :d="lanes" />
            <path v-for="(l, i) in flat" :key="'f' + i" class="line" :class="l[0]" :transform="place(l[1])" :d="l[2]" />
            <template v-for="kind in cased" :key="kind">
              <template v-for="(l, i) in roads" :key="kind + i">
                <path v-if="l[0] === kind" class="line" :class="kind + '-case'" :transform="place(l[1])" :d="l[2]" />
              </template>
              <template v-for="(l, i) in roads" :key="kind + 'fill' + i">
                <path v-if="l[0] === kind" class="line" :class="kind" :transform="place(l[1])" :d="l[2]" />
              </template>
            </template>
            <template v-for="(b, i) in borders" :key="'b' + i">
              <path class="line" :class="b[0]" :transform="place(b[1])" :d="b[2]" />
              <path v-if="b[0] === 'province'" class="line province-core" :transform="place(b[1])" :d="b[2]" />
            </template>
            <path v-for="p in peaks" :key="p[0]" class="peak" :d="`M${p[0]} ${p[1] - 4}l4 7h-8z`" />
            <path v-for="p in redPeaks" :key="p[0]" class="peak red" :d="`M${p[0]} ${p[1] - 4}l4 7h-8z`" />
            <path d="M813 586l3 1 1 2 -2 -1z" fill="#222" />
            <text v-for="(t, i) in labels" :key="'t' + i" class="place" :class="t[3]" :x="t[1]" :y="t[2]">{{ t[0] }}</text>
            <text class="place edge"><textPath href="#luzon-line">Central Luzon</textPath></text>
            <text class="place edge"><textPath href="#ilocos-line">Ilocos Region</textPath></text>
            <rect x="1021" y="441" width="20" height="16" rx="2" class="road-tag" />
            <text class="road-number" x="1031" y="454">55</text>
            <g :transform="place('C')">
              <circle v-for="s in stops" :key="s[0]" class="stop" :cx="s[0]" :cy="s[1]" r="46" />
              <path class="route" d="M365 30 340 120 286 272 300 335 318 395 340 420 450 532 475 568 490 572 690 702 790 797 840 860 920 937 993 958 1095 1046 1155 1078 1205 1150 1335 1331 1380 1350 1500 1437 1550 1466 1605 1482 1640 1498 1680 1545" />
            </g>
          </svg>
          <div class="zoom">
            <button type="button" aria-label="Zoom in">+</button>
            <button type="button" aria-label="Zoom out">−</button>
          </div>
          <div class="credit"><a href="#">Leaflet</a> | Map data © <a href="#">OpenStreetMap</a> contributors</div>
        </div>
      </section>

      <section class="card records-card">
        <h2 class="card-title">Bus Tracking Records</h2>
        <div class="filters">
          <div class="select-box">
            <select v-model="recordBus" aria-label="Bus for records">
              <option v-for="b in buses" :key="b">{{ b }}</option>
            </select>
            <svg viewBox="0 0 16 16" aria-hidden="true"><path d="m2 5 6 6 6-6" /></svg>
          </div>
          <button type="button" class="btn">Reload</button>
        </div>
        <table class="records">
          <thead>
            <tr><th class="col-id" scope="col">Bus ID</th><th class="col-place" scope="col">Location</th><th scope="col">Timestamp</th></tr>
          </thead>
        </table>
        <div class="pager">
          <button type="button" class="btn" disabled>Previous</button>
          <span>1</span>
          <button type="button" class="btn" disabled>Next</button>
        </div>
      </section>
    </main>

    <div class="scroll-track" aria-hidden="true">
      <svg viewBox="0 0 6 5"><path d="M0 5 4 0 8 5z" /></svg>
      <div class="scroll-thumb"></div>
    </div>
  </div>
</template>

<style>
body {
  margin: 0;
  background: #f5f7fb;
}
</style>

<style scoped>
* {
  box-sizing: border-box;
}
.shell {
  display: flex;
  min-height: 100vh;
  font-family: Inter, "Liberation Sans", sans-serif;
  font-size: 14px;
  color: #495057;
  background: #f5f7fb;
}
.sidebar {
  flex: 0 0 254px;
  background: #222e3c;
}
.brand {
  display: block;
  height: 62px;
  padding: 16px 18px;
  font-size: 18px;
  line-height: 26px;
  font-weight: 700;
  color: #f8f9fa;
  text-decoration: none;
}
.nav {
  display: flex;
  flex-direction: column;
  gap: 1px;
}
.nav-link {
  display: flex;
  align-items: center;
  height: 42px;
  padding: 1px 23px 0;
  font-size: 14px;
  color: rgba(233, 236, 239, 0.5);
  text-decoration: none;
}
.nav-link.active {
  color: #e9ecef;
  background: linear-gradient(90deg, rgba(59, 125, 221, 0.12), rgba(59, 125, 221, 0.09) 50%, transparent);
}
.icon-lg {
  width: 18px;
  height: 18px;
  margin-right: 16px;
  fill: none;
  stroke: #ced4da;
  stroke-width: 2;
  stroke-linecap: round;
}
.icon {
  width: 13px;
  height: 14px;
  margin: 0 15px 4px 0;
  fill: #8f969e;
}
.icon.ticket {
  width: 14px;
  margin-right: 16px;
}
.content {
  flex: 1;
  min-width: 0;
  padding: 4px 36px 24px;
}
.title {
  margin: 0 0 12px 12px;
  font-size: 21px;
  line-height: 32px;
  font-weight: 400;
  color: #000;
}
.title strong {
  font-weight: 600;
}
.card {
  margin-bottom: 24px;
  background: #fff;
  border-radius: 4px;
  box-shadow: 0 0 14px rgba(33, 37, 41, 0.05);
}
.card:last-child {
  margin-bottom: 0;
}
.card-title {
  margin: 0;
  font-size: 15px;
  line-height: 24px;
  font-weight: 600;
  color: #939ba2;
}
.map-card {
  padding: 12px 22px 10px;
}
.map-card .card-title {
  padding-left: 10px;
}
.select-box {
  position: relative;
}
.map-select {
  width: calc(25% + 5px);
  min-width: 200px;
  margin: 15px 0 10px -2px;
}
select {
  display: block;
  width: 100%;
  height: 33px;
  padding: 0 36px 0 13px;
  font: inherit;
  color: #495057;
  background: #fff;
  border: 1px solid #ced4da;
  border-radius: 3px;
  appearance: none;
}
.select-box svg {
  position: absolute;
  top: 10px;
  right: 16px;
  width: 13px;
  height: 13px;
  fill: none;
  stroke: #343a40;
  stroke-width: 2;
  stroke-linecap: round;
  stroke-linejoin: round;
  pointer-events: none;
}
.map {
  position: relative;
  height: 500px;
  overflow: hidden;
}
.map-canvas {
  display: block;
  width: 100%;
  height: 100%;
}
.farm, .plot { fill: #eef0d5; }
.forest { fill: #add19e; }
.grass { fill: #cdebb0; }
.scrub { fill: #c8d7ab; }
.bare, .clearing { fill: #f2efe9; }
.sand { fill: #f5dcba; }
.park { fill: #aedfa3; }
.wood { fill: #9fcbaa; }
.urban { fill: #d4d2cf; }
.water { fill: #aad3df; }
.airfield { fill: #bbbbcc; }
.reserve {
  fill: #f2efe9;
  stroke: #a9cfa8;
  stroke-width: 9;
}
.reserve-line {
  fill: none;
  stroke: #7fbf84;
  stroke-opacity: 0.7;
  stroke-width: 7;
}
.line {
  fill: none;
  stroke-linejoin: round;
}
.lanes {
  fill: none;
  stroke: #d3d0cd;
  stroke-width: 1;
}
.river { stroke: #aad3df; stroke-width: 5; }
.minor { stroke: #c6c4c2; stroke-width: 3; }
.tertiary-case { stroke: #bbb; stroke-width: 8; }
.tertiary { stroke: #fff; stroke-width: 5; }
.secondary-case { stroke: #c9cd80; stroke-width: 11; }
.secondary { stroke: #f4f8b2; stroke-width: 8; }
.primary-case { stroke: #d9a35c; stroke-width: 12; }
.primary { stroke: #fcd09a; stroke-width: 8; }
.trunk-case { stroke: #da8065; stroke-width: 13; }
.trunk { stroke: #f9b29c; stroke-width: 9; }
.motorway-case { stroke: #cf5877; stroke-width: 13; }
.motorway { stroke: #e892a2; stroke-width: 9; }
.ramp { stroke: #dd7288; stroke-width: 6; }
.town {
  stroke: #a584a8;
  stroke-opacity: 0.6;
  stroke-width: 5;
  stroke-dasharray: 24 6 5 6;
}
.province {
  stroke: #a584a8;
  stroke-opacity: 0.5;
  stroke-width: 10;
}
.province-core {
  stroke: #8d618b;
  stroke-opacity: 0.6;
  stroke-width: 3;
}
.peak { fill: #d08f55; }
.peak.red { fill: #d40000; }
.place {
  font-family: "Noto Sans", sans-serif;
  font-size: 10px;
  text-anchor: middle;
  fill: #222;
  stroke: rgba(255, 255, 255, 0.65);
  stroke-width: 2px;
  paint-order: stroke;
}
.big { font-size: 13px; }
.region {
  font-size: 11px;
  font-style: italic;
  fill: #8d618b;
}
.nature {
  font-style: italic;
  fill: #108010;
}
.shield {
  font-style: italic;
  fill: #b01c2e;
}
.edge {
  text-anchor: start;
  fill: #8d618b;
}
.road-tag {
  fill: #f6d9d2;
  stroke: #d9a090;
}
.road-number {
  font-family: "Noto Sans", sans-serif;
  font-size: 10px;
  text-anchor: middle;
  fill: #6b3a3a;
}
.stop {
  fill: #00f;
  fill-opacity: 0.2;
  stroke: #00f;
  stroke-width: 9;
}
.route {
  fill: none;
  stroke: #f00;
  stroke-width: 10;
  stroke-linejoin: round;
}
.zoom {
  position: absolute;
  top: 10px;
  left: 10px;
  display: flex;
  flex-direction: column;
  border: 2px solid rgba(0, 0, 0, 0.2);
  border-radius: 4px;
}
.zoom button {
  width: 30px;
  height: 30px;
  padding: 0;
  font: 700 22px/30px "Liberation Sans", sans-serif;
  color: #000;
  background: #fff;
  border: 0;
}
.zoom button:first-child {
  border-bottom: 1px solid #ccc;
  border-radius: 2px 2px 0 0;
}
.zoom button:last-child {
  border-radius: 0 0 2px 2px;
}
.credit {
  position: absolute;
  right: 0;
  bottom: 0;
  padding: 0 5px;
  font: 500 11px/17px Roboto, "Liberation Sans", sans-serif;
  color: #333;
  background: rgba(255, 255, 255, 0.8);
}
.credit a {
  color: #0078a8;
  text-decoration: none;
}
.records-card {
  padding: 12px 32px 20px;
}
.filters {
  display: grid;
  grid-template-columns: 1fr 1fr;
  gap: 24px;
  margin: 34px 0 8px;
}
.btn {
  height: 33px;
  padding: 0 15px;
  font: inherit;
  color: #fff;
  background: #3b7ddd;
  border: 0;
  border-radius: 3px;
}
.btn:disabled {
  opacity: 0.65;
}
.records {
  width: 100%;
  border-collapse: collapse;
  table-layout: fixed;
  border-top: 1px solid #dee2e6;
  border-bottom: 2px solid #dee2e6;
}
.records th {
  height: 46px;
  padding: 0 12px;
  text-align: left;
  font-weight: 700;
}
.records .col-id {
  width: 402px;
}
.records .col-place {
  width: 500px;
}
.pager {
  display: flex;
  justify-content: center;
  align-items: center;
  gap: 8px;
  margin-top: 32px;
}
.pager .btn {
  height: 32px;
  padding-top: 1px;
}
.scroll-track {
  flex: 0 0 9px;
  padding: 7px 0 0 3px;
  background: #fcfcfc;
}
.scroll-track svg {
  display: block;
  width: 6px;
  height: 5px;
  fill: #8b8b8b;
}
.scroll-thumb {
  height: 809px;
  margin-top: 82px;
  background: #8b8b8b;
  border-radius: 4px 0 0 4px;
}
</style>
